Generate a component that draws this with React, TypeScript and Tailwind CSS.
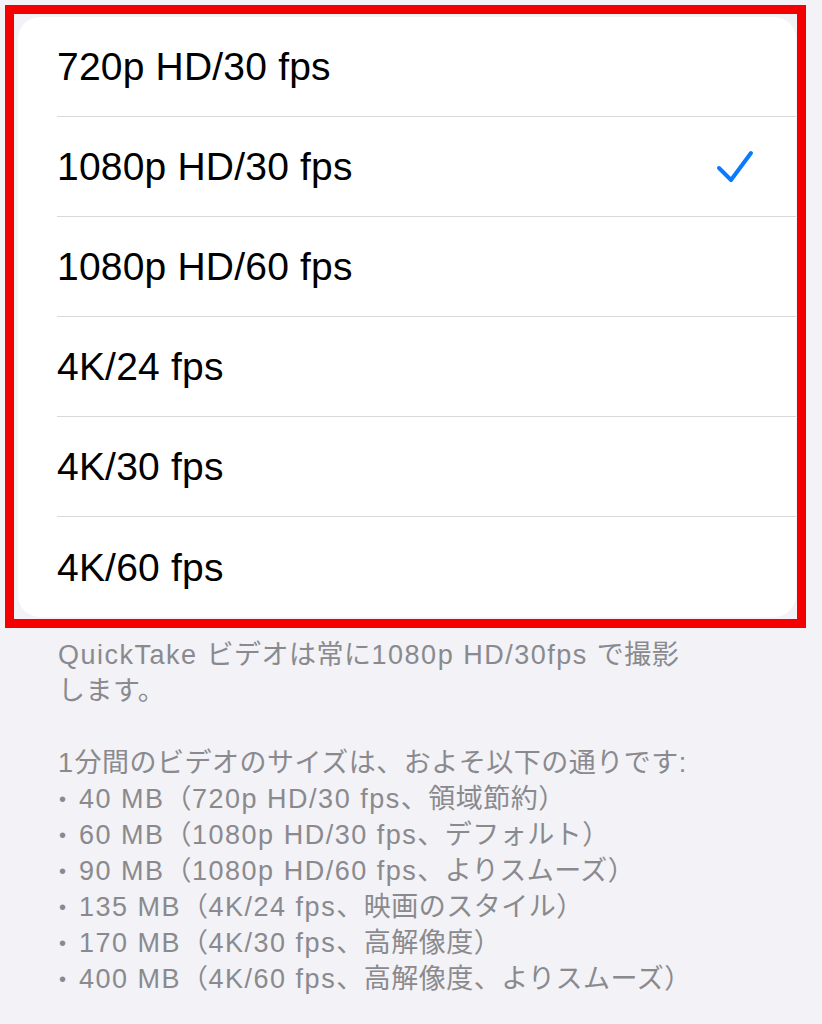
import React from 'react';

const options = [
  { label: '720p HD/30 fps', selected: false },
  { label: '1080p HD/30 fps', selected: true },
  { label: '1080p HD/60 fps', selected: false },
  { label: '4K/24 fps', selected: false },
  { label: '4K/30 fps', selected: false },
  { label: '4K/60 fps', selected: false },
];

const sizes = [
  '40 MB（720p HD/30 fps、領域節約）',
  '60 MB（1080p HD/30 fps、デフォルト）',
  '90 MB（1080p HD/60 fps、よりスムーズ）',
  '135 MB（4K/24 fps、映画のスタイル）',
  '170 MB（4K/30 fps、高解像度）',
  '400 MB（4K/60 fps、高解像度、よりスムーズ）',
];

// latin runs get a bit more tracking than the kana/kanji around them
const Mixed = ({ text }: { text: string }) => (
  <>
    {text.split(/([\u0000-\u024f]+)/).filter(Boolean).map((part, i) =>
      /^[\u0000-\u024f]+$/.test(part) ? (
        <span key={i} className="tracking-[1.5px]">{part}</span>
      ) : (
        <span key={i} className="tracking-[0.5px]">{part}</span>
      )
    )}
  </>
);

const Check = () => (
  <svg width="38" height="33" viewBox="0 0 38 33" fill="none">
    <path
      d="M3 18 L15 30 L35 3"
      stroke="#0a7aff"
      strokeWidth="4"
      strokeLinecap="round"
      strokeLinejoin="round"
    />
  </svg>
);

export default function App() {
  return (
    <div
      className="relative w-[822px] h-[1024px] bg-[#f2f2f7] pt-[17px] overflow-hidden"
      style={{ fontFamily: '"Liberation Sans", "Noto Sans CJK JP", sans-serif' }}
    >
      {/* option list */}
      <div className="ml-[18px] w-[778px] bg-white rounded-[22px] overflow-hidden">
        {options.map((opt, i) => (
          <div key={opt.label} className="h-[100px] flex pl-[39px]">
            <div
              className={
                i < options.length - 1
                  ? 'flex-1 flex items-center justify-between pr-[42px] border-b border-[#d9d9dc]'
                  : 'flex-1 flex items-center justify-between pr-[42px]'
              }
            >
              <span className="text-[39px] leading-none text-black tracking-[0.2px]">{opt.label}</span>
              {opt.selected && <Check />}
            </div>
          </div>
        ))}
      </div>

      {/* footer note */}
      <div className="mt-[20px] pl-[58px] text-[27px] leading-[36px] text-[#8a8a8e] whitespace-nowrap">
        <p><Mixed text="QuickTake ビデオは常に1080p HD/30fps で撮影" /></p>
        <p><Mixed text="します。" /></p>
        <p className="mt-[36px]"><Mixed text="1分間のビデオのサイズは、およそ以下の通りです:" /></p>
        {sizes.map((s) => (
          <p key={s} className="flex items-center">
            <span className="w-[21px] shrink-0 text-[20px] pl-[1px]">•</span>
            <span><Mixed text={s} /></span>
          </p>
        ))}
      </div>

      {/* red highlight frame */}
      <div className="absolute left-[5px] top-[5px] w-[801px] h-[623px] border-[9px] border-[#f40000] pointer-events-none" />
    </div>
  );
}
